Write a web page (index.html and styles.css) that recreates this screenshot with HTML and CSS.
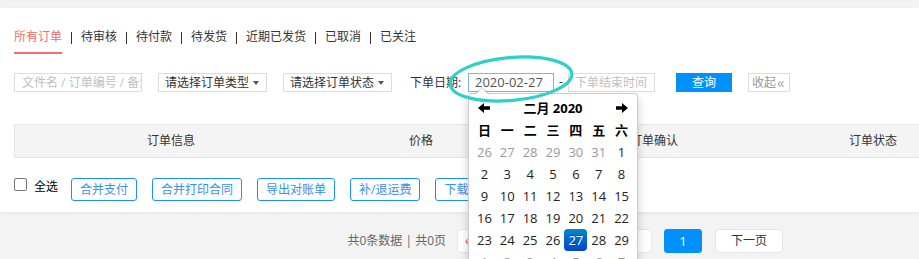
FILE: index.html
```html
<!DOCTYPE html>
<html lang="zh-CN">
<head>
<meta charset="utf-8">
<title>订单列表</title>
<link rel="stylesheet" href="styles.css">
</head>
<body>
<div class="panel">
  <nav class="tabs">
    <a class="tab active">所有订单</a><span class="sep"></span>
    <a class="tab">待审核</a><span class="sep"></span>
    <a class="tab">待付款</a><span class="sep"></span>
    <a class="tab">待发货</a><span class="sep"></span>
    <a class="tab">近期已发货</a><span class="sep"></span>
    <a class="tab">已取消</a><span class="sep"></span>
    <a class="tab">已关注</a>
  </nav>

  <div class="search">
    <div class="field keyword placeholder">文件名 / 订单编号 / 备注</div>
    <div class="field select">请选择订单类型<span class="caret"></span></div>
    <div class="field select">请选择订单状态<span class="caret"></span></div>
    <span class="label">下单日期:</span>
    <div class="date-wrap">
      <div class="field date">2020-02-27</div>
      <div class="datepicker">
        <span class="nav"><svg width="12" height="10" viewBox="0 0 12 10"><polygon points="0,5 6,0 6,3.3 12,3.3 12,6.7 6,6.7 6,10" fill="#000"/></svg></span>
        <span class="title">二月 2020</span>
        <span class="nav"><svg width="12" height="10" viewBox="0 0 12 10"><polygon points="12,5 6,0 6,3.3 0,3.3 0,6.7 6,6.7 6,10" fill="#000"/></svg></span>
        <span class="dow">日</span><span class="dow">一</span><span class="dow">二</span><span class="dow">三</span><span class="dow">四</span><span class="dow">五</span><span class="dow">六</span>
        <span class="day old">26</span><span class="day old">27</span><span class="day old">28</span><span class="day old">29</span><span class="day old">30</span><span class="day old">31</span><span class="day">1</span>
        <span class="day">2</span><span class="day">3</span><span class="day">4</span><span class="day">5</span><span class="day">6</span><span class="day">7</span><span class="day">8</span>
        <span class="day">9</span><span class="day">10</span><span class="day">11</span><span class="day">12</span><span class="day">13</span><span class="day">14</span><span class="day">15</span>
        <span class="day">16</span><span class="day">17</span><span class="day">18</span><span class="day">19</span><span class="day">20</span><span class="day">21</span><span class="day">22</span>
        <span class="day">23</span><span class="day">24</span><span class="day">25</span><span class="day">26</span><span class="day active">27</span><span class="day">28</span><span class="day">29</span>
        <span class="day old">1</span><span class="day old">2</span><span class="day old">3</span><span class="day old">4</span><span class="day old">5</span><span class="day old">6</span><span class="day old">7</span>
      </div>
    </div>
    <span class="dash">-</span>
    <div class="field end placeholder">下单结束时间</div>
    <button class="btn-query">查询</button>
    <div class="field collapse">收起<span class="chev">«</span></div>
  </div>

  <div class="thead">
    <span>订单信息</span>
    <span>价格</span>
    <span>订单确认</span>
    <span>订单状态</span>
  </div>

  <div class="actions">
    <span class="checkbox"></span>
    <span class="check-label">全选</span>
    <button class="btn-line">合并支付</button>
    <button class="btn-line">合并打印合同</button>
    <button class="btn-line">导出对账单</button>
    <button class="btn-line">补/退运费</button>
    <button class="btn-line">下载合同</button>
  </div>
</div>

<div class="pager">
  <span class="total">共0条数据 | 共0页</span>
  <span class="pg prev"><span class="red">«</span> 上一页</span>
  <span class="pg current">1</span>
  <span class="pg next">下一页</span>
</div>

<svg class="annot" width="140" height="60" viewBox="0 0 140 60">
  <ellipse cx="70" cy="29" rx="61" ry="21.5" transform="rotate(-5 70 29)" fill="none" stroke="#2ed0cb" stroke-width="3.2"/>
</svg>
</body>
</html>
```

FILE: styles.css
```css
html, body {
  margin: 0;
  padding: 0;
}

body {
  width: 919px;
  height: 259px;
  overflow: hidden;
  position: relative;
  background: #f3f3f3;
  font-family: "Open Sans", "Noto Sans CJK SC", sans-serif;
  font-size: 12px;
  line-height: 14px;
  color: #333;
}

.panel {
  margin-top: 8px;
  background: #fff;
  padding: 22px 0 11px 14px;
  box-shadow: 0 1px 3px rgba(0, 0, 0, 0.07);
}

/* tabs */
.tabs {
  display: flex;
  align-items: flex-start;
}

.tab {
  line-height: 14px;
  padding-bottom: 8px;
  border-bottom: 2px solid transparent;
  color: #333;
}

.tab.active {
  color: #f56c6c;
  border-bottom-color: #f56c6c;
}

.sep {
  width: 1px;
  height: 12px;
  margin: 2px 9px 0;
  background: #333;
}

/* search row */
.search {
  display: flex;
  align-items: flex-start;
  margin-top: 19px;
  height: 19px;
}

.field {
  box-sizing: border-box;
  height: 19px;
  border: 1px solid #ddd;
  line-height: 17px;
  padding: 0 6px;
  white-space: nowrap;
  overflow: hidden;
  background: #fff;
}

.placeholder {
  color: #c0c0c0;
}

.keyword {
  width: 128px;
  padding-left: 7px;
}

.select {
  width: 109px;
  margin-left: 16px;
  display: flex;
  align-items: center;
  justify-content: space-between;
  padding-right: 7px;
  border-color: #dcdcdc;
  color: #333;
}

.caret {
  width: 0;
  height: 0;
  border-left: 3px solid transparent;
  border-right: 3px solid transparent;
  border-top: 4px solid #555;
}

.label {
  width: 50px;
  margin-left: 18px;
  line-height: 19px;
  color: #333;
  white-space: nowrap;
}

.date-wrap {
  position: relative;
  margin-left: 8px;
}

.date {
  width: 86px;
  border-color: #7ab4ea;
  color: #555;
  font-size: 13px;
}

.dash {
  width: 14px;
  text-align: center;
  line-height: 17px;
  color: #333;
}

.end {
  width: 87px;
}

.btn-query {
  margin-left: 21px;
  width: 56px;
  height: 19px;
  border: 0;
  padding: 0;
  background: #0091ff;
  color: #fff;
  font: inherit;
  line-height: 19px;
}

.collapse {
  margin-left: 16px;
  width: 42px;
  padding: 0 3px;
  color: #999;
  display: flex;
  align-items: center;
}

.chev {
  font-size: 15px;
  color: #aaa;
  margin-left: 1px;
  line-height: 17px;
}

/* datepicker */
.datepicker {
  position: absolute;
  left: 0;
  top: 20px;
  width: 170px;
  box-sizing: border-box;
  padding: 3px 4px 4px;
  background: #fff;
  border: 1px solid rgba(0, 0, 0, 0.2);
  border-radius: 4px;
  box-shadow: 0 5px 10px rgba(0, 0, 0, 0.2);
  z-index: 10;
  display: grid;
  grid-template-columns: repeat(7, 1fr);
  grid-auto-rows: 22px;
  font-size: 13px;
  line-height: 22px;
  text-align: center;
  color: #000;
}

.datepicker::before {
  content: "";
  position: absolute;
  top: -7px;
  left: 6px;
  border-left: 7px solid transparent;
  border-right: 7px solid transparent;
  border-bottom: 7px solid rgba(0, 0, 0, 0.2);
}

.datepicker::after {
  content: "";
  position: absolute;
  top: -6px;
  left: 7px;
  border-left: 6px solid transparent;
  border-right: 6px solid transparent;
  border-bottom: 6px solid #fff;
}

.datepicker .nav {
  display: flex;
  align-items: center;
  justify-content: center;
}

.datepicker .title {
  grid-column: span 5;
  font-weight: 700;
}

.dow {
  font-weight: 700;
}

.day {
  color: #222;
}

.day.old {
  color: #999;
}

.day.active {
  color: #fff;
  background-image: linear-gradient(to bottom, #0088cc, #0044cc);
  border-radius: 4px;
  text-shadow: 0 -1px 0 rgba(0, 0, 0, 0.25);
}

/* table header */
.thead {
  margin-top: 32px;
  width: 938px;
  height: 34px;
  box-sizing: border-box;
  border: 1px solid #e6e6e6;
  background: #f4f4f4;
  display: grid;
  grid-template-columns: 312px 188px 278px 160px;
  text-align: center;
  line-height: 32px;
  color: #333;
}

/* actions */
.actions {
  margin-top: 20px;
  display: flex;
  align-items: flex-start;
  height: 23px;
}

.checkbox {
  width: 13px;
  height: 13px;
  box-sizing: border-box;
  border: 1px solid #767676;
  border-radius: 2px;
  background: #fff;
}

.check-label {
  margin-left: 7px;
  line-height: 20px;
  margin-top: -1px;
  color: #000;
}

.btn-line {
  height: 23px;
  margin-left: 15px;
  padding: 0 8px;
  border: 1px solid #1a90ff;
  border-radius: 3px;
  background: #fff;
  color: #3a8ef0;
  font: inherit;
  line-height: 21px;
}

.check-label + .btn-line {
  margin-left: 13px;
}

/* pager */
.pager {
  margin-top: 17px;
  display: flex;
  justify-content: flex-end;
  align-items: center;
  padding-right: 136px;
  height: 24px;
}

.total {
  color: #666;
  margin-right: 11px;
}

.pg {
  box-sizing: border-box;
  height: 24px;
  line-height: 22px;
  border: 1px solid #e6e6e6;
  border-radius: 4px;
  background: #fff;
  text-align: center;
  color: #333;
}

.prev {
  width: 195px;
  text-align: left;
  padding-left: 7px;
}

.red {
  color: #e64340;
}

.current {
  width: 38px;
  margin-left: 12px;
  border-color: #0091ff;
  background: #0091ff;
  color: #fff;
  font-size: 13px;
  border-radius: 3px;
}

.next {
  width: 68px;
  margin-left: 13px;
}

/* annotation ellipse */
.annot {
  position: absolute;
  left: 441px;
  top: 50px;
  z-index: 20;
}
```
